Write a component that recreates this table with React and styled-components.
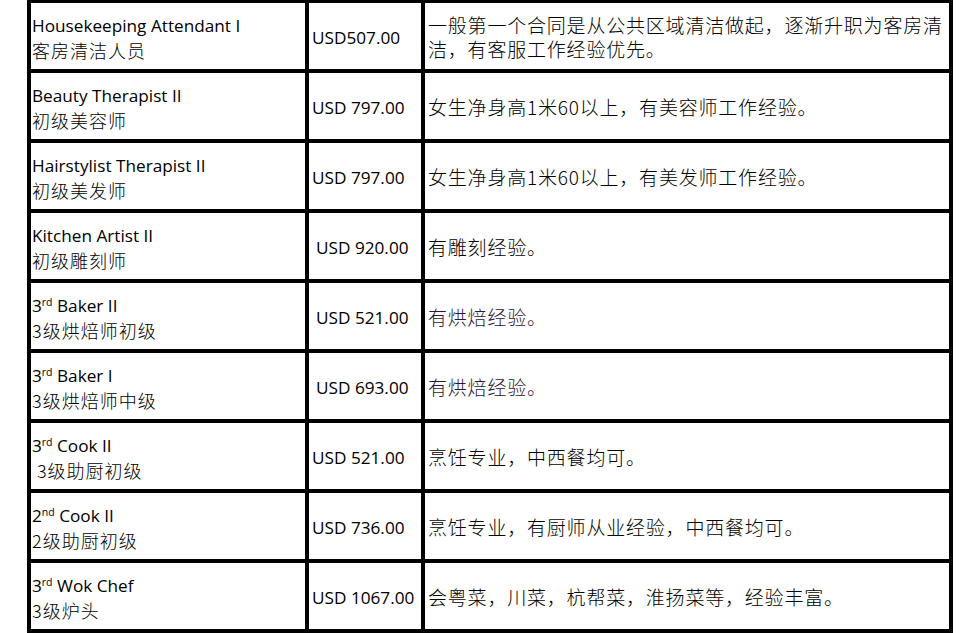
import React from 'react'
import styled, { createGlobalStyle } from 'styled-components'

const GlobalStyle = createGlobalStyle`
    html, body {
        margin: 0;
        padding: 0;
        background: #ffffff;
        overflow: hidden;
    }
`

const Page = styled.div`
    padding-left: 27px;
    margin-top: -1px;
`

const Table = styled.div`
    display: grid;
    grid-template-columns: 274px 112px 524px;
    grid-auto-rows: 66px;
    gap: 4px;
    padding: 4px;
    background: #000;
    width: fit-content;
`

const Cell = styled.div`
    background: #fff;
    display: flex;
    flex-direction: column;
    justify-content: center;
    overflow: hidden;
    white-space: pre;
    color: #000;
`

const PositionCell = styled(Cell)`
    padding: 4px 0 0 1px;
`

const EnLine = styled.div`
    font-family: "Open Sans", "Noto Sans", sans-serif;
    font-size: 17.2px;
    line-height: 24px;
    sup {
        font-size: 10.5px;
        line-height: 0;
        vertical-align: 0.6em;
    }
`

const CnLine = styled.div`
    font-family: "Noto Sans CJK SC", "Open Sans", sans-serif;
    font-size: 18px;
    letter-spacing: 1px;
    font-weight: 300;
    line-height: 24px;
`

const SalaryCell = styled(Cell)`
    font-family: "Open Sans", "Noto Sans", sans-serif;
    font-size: 17.2px;
    padding: 3px 0 0 ${(p) => p.indent}px;
`

const NoteCell = styled(Cell)`
    font-family: "Noto Sans CJK SC", sans-serif;
    font-size: 19px;
    font-weight: 300;
    letter-spacing: 0.8px;
    line-height: 24px;
    padding: 2px 0 0 3px;
    color: ${(p) => p.tint || '#000'};
`

const rows = [
    { en: ['Housekeeping Attendant I'], cn: '客房清洁人员', pay: 'USD507.00', indent: 3, note: ['一般第一个合同是从公共区域清洁做起，逐渐升职为客房清', '洁，有客服工作经验优先。'] },
    { en: ['Beauty Therapist II'], cn: '初级美容师', pay: 'USD 797.00', indent: 3, note: ['女生净身高1米60以上，有美容师工作经验。'] },
    { en: ['Hairstylist Therapist II'], cn: '初级美发师', pay: 'USD 797.00', indent: 3, note: ['女生净身高1米60以上，有美发师工作经验。'] },
    { en: ['Kitchen Artist II'], cn: '初级雕刻师', pay: 'USD 920.00', indent: 7, note: ['有雕刻经验。'] },
    { en: ['3', 'rd', ' Baker II'], cn: '3级烘焙师初级', pay: 'USD 521.00', indent: 7, note: ['有烘焙经验。'], tint: '#2a1536' },
    { en: ['3', 'rd', ' Baker I'], cn: '3级烘焙师中级', pay: 'USD 693.00', indent: 7, note: ['有烘焙经验。'], tint: '#2a1536' },
    { en: ['3', 'rd', ' Cook II'], cn: ' 3级助厨初级', pay: 'USD 521.00', indent: 3, note: ['烹饪专业，中西餐均可。'] },
    { en: ['2', 'nd', ' Cook II'], cn: '2级助厨初级', pay: 'USD 736.00', indent: 3, note: ['烹饪专业，有厨师从业经验，中西餐均可。'] },
    { en: ['3', 'rd', ' Wok Chef'], cn: '3级炉头', pay: 'USD 1067.00', indent: 3, note: ['会粤菜，川菜，杭帮菜，淮扬菜等，经验丰富。'] },
]

function Title({ parts }) {
    if (parts.length === 1) return <EnLine>{parts[0]}</EnLine>
    return (
        <EnLine>
            {parts[0]}<sup>{parts[1]}</sup>{parts[2]}
        </EnLine>
    )
}

export default function App() {
    return (
        <Page>
            <GlobalStyle />
            <Table>
                {rows.map((r, i) => (
                    <React.Fragment key={i}>
                        <PositionCell>
                            <Title parts={r.en} />
                            <CnLine>{r.cn}</CnLine>
                        </PositionCell>
                        <SalaryCell indent={r.indent}>{r.pay}</SalaryCell>
                        <NoteCell tint={r.tint}>
                            {r.note.map((line, j) => <div key={j}>{line}</div>)}
                        </NoteCell>
                    </React.Fragment>
                ))}
            </Table>
        </Page>
    )
}
